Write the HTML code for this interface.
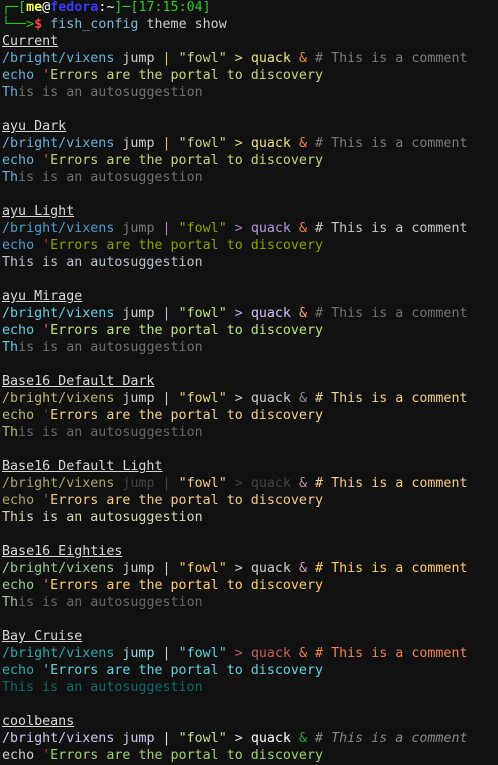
<!DOCTYPE html>
<html><head><meta charset="utf-8"><style>
body{margin:0;background:#111111;width:498px;height:765px;overflow:hidden}
pre{margin:0;padding:0 0 0 2px;position:relative;top:-1px;font-family:"DejaVu Sans Mono","Liberation Mono",monospace;font-size:13.33px;line-height:17px;color:#cccccc;white-space:pre}
u{text-decoration:underline;color:#d8d8d8}
.g{color:#22cc22}
</style></head><body><pre><span class="g">┌─[</span><b style="color:#ffff55">me</b><span style="color:#fff">@</span><b style="color:#3a3aff">fedora</b><span style="color:#fff">:~</span><span class="g">]─[17:15:04]</span>
<span class="g">└──&gt;</span><b style="color:#ff4040">$</b> <span style="color:#7ab8d8">fish_config</span> <span style="color:#ccc">theme show</span>
<u>Current</u>
<span style="color:#62b0dc">/bright/vixens</span> <span style="color:#ccc">jump</span> <span style="color:#e6c24a">|</span> <span style="color:#c2d67a">"fowl"</span> <span style="color:#e6d480">&gt;</span> <span style="color:#e6e08a">quack</span> <span style="color:#f08048">&amp;</span> <span style="color:#7a7a7a"># This is a comment</span>
<span style="color:#62b0dc">echo</span> <span style="color:#f05050">'</span><span style="color:#c2d67a">Errors are the portal to discovery</span>
<span style="color:#62b0dc">Th</span><span style="color:#707070">is is an autosuggestion</span>

<u>ayu Dark</u>
<span style="color:#62b0dc">/bright/vixens</span> <span style="color:#ccc">jump</span> <span style="color:#e6c24a">|</span> <span style="color:#c2d67a">"fowl"</span> <span style="color:#e6d480">&gt;</span> <span style="color:#e6e08a">quack</span> <span style="color:#f08048">&amp;</span> <span style="color:#7a7a7a"># This is a comment</span>
<span style="color:#62b0dc">echo</span> <span style="color:#f05050">'</span><span style="color:#c2d67a">Errors are the portal to discovery</span>
<span style="color:#62b0dc">Th</span><span style="color:#707070">is is an autosuggestion</span>

<u>ayu Light</u>
<span style="color:#4a9fd0">/bright/vixens</span> <span style="color:#777">jump</span> <span style="color:#b080d0">|</span> <span style="color:#8aa000">"fowl"</span> <span style="color:#b080d0">&gt;</span> <span style="color:#b898e0">quack</span> <span style="color:#f08040">&amp;</span> <span style="color:#c8c8c8"># This is a comment</span>
<span style="color:#4a9fd0">echo</span> <span style="color:#f03030">'</span><span style="color:#8aa000">Errors are the portal to discovery</span>
<span style="color:#b8c0c8">This is an autosuggestion</span>

<u>ayu Mirage</u>
<span style="color:#5ccfe6">/bright/vixens</span> <span style="color:#ccc">jump</span> <span style="color:#c8a8f0">|</span> <span style="color:#bae67e">"fowl"</span> <span style="color:#c8a8f0">&gt;</span> <span style="color:#d4bfff">quack</span> <span style="color:#f29e74">&amp;</span> <span style="color:#707070"># This is a comment</span>
<span style="color:#5ccfe6">echo</span> <span style="color:#f07070">'</span><span style="color:#bae67e">Errors are the portal to discovery</span>
<span style="color:#5ccfe6">Th</span><span style="color:#707070">is is an autosuggestion</span>

<u>Base16 Default Dark</u>
<span style="color:#b8b870">/bright/vixens</span> <span style="color:#ccc">jump</span> <span style="color:#ccc">|</span> <span style="color:#f0d080">"fowl"</span> <span style="color:#ccc">&gt;</span> <span style="color:#ccc">quack</span> <span style="color:#a080a8">&amp;</span> <span style="color:#f0d08a"># This is a comment</span>
<span style="color:#b8b870">echo</span> <span style="color:#555">'</span><span style="color:#f0d08a">Errors are the portal to discovery</span>
<span style="color:#b8b870">Th</span><span style="color:#666">is is an autosuggestion</span>

<u>Base16 Default Light</u>
<span style="color:#a8a860">/bright/vixens</span> <span style="color:#444">jump</span> <span style="color:#444">|</span> <span style="color:#f7ca88">"fowl"</span> <span style="color:#444">&gt;</span> <span style="color:#444">quack</span> <span style="color:#ba8baf">&amp;</span> <span style="color:#f7ca88"># This is a comment</span>
<span style="color:#a8a860">echo</span> <span style="color:#777">'</span><span style="color:#f7ca88">Errors are the portal to discovery</span>
<span style="color:#d8d8b0">This is an autosuggestion</span>

<u>Base16 Eighties</u>
<span style="color:#99cc99">/bright/vixens</span> <span style="color:#ccc">jump</span> <span style="color:#ccc">|</span> <span style="color:#ffcc66">"fowl"</span> <span style="color:#ccc">&gt;</span> <span style="color:#ccc">quack</span> <span style="color:#cc99cc">&amp;</span> <span style="color:#ffcc66"># This is a comment</span>
<span style="color:#99cc99">echo</span> <span style="color:#f2777a">'</span><span style="color:#ffcc66">Errors are the portal to discovery</span>
<span style="color:#99cc99">Th</span><span style="color:#666">is is an autosuggestion</span>

<u>Bay Cruise</u>
<span style="color:#2aa8a8">/bright/vixens</span> <span style="color:#90d8e8">jump</span> <span style="color:#ccc">|</span> <span style="color:#60d0e0">"fowl"</span> <span style="color:#c06060">&gt;</span> <span style="color:#c06060">quack</span> <span style="color:#f08050">&amp;</span> <span style="color:#f08050"># This is a comment</span>
<span style="color:#2aa8a8">echo</span> <span style="color:#60d0e0">'</span><span style="color:#60d0e0">Errors are the portal to discovery</span>
<span style="color:#106a6a">This is an autosuggestion</span>

<u>coolbeans</u>
<span style="color:#c8c8f0">/bright/vixens</span> <span style="color:#c8c8f0">jump</span> <span style="color:#ddd">|</span> <span style="color:#c0e090">"fowl"</span> <span style="color:#ddd">&gt;</span> <span style="color:#fff">quack</span> <span style="color:#30a030">&amp;</span> <i style="color:#888"># This is a comment</i>
<span style="color:#ccc">echo</span> <span style="color:#f03030">'</span><span style="color:#a0d070">Errors are the portal to discovery</span>
</pre></body></html>
